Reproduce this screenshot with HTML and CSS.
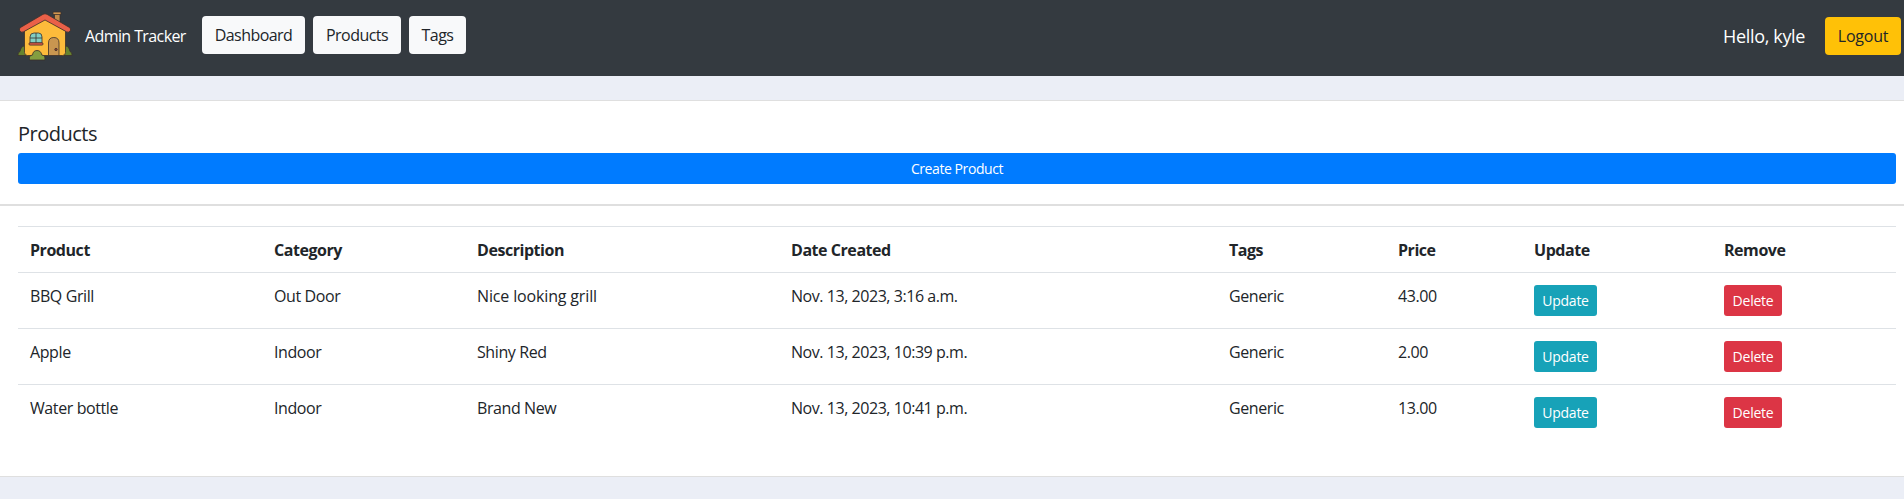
FILE: index.html
```html
<!DOCTYPE html>
<html lang="en">
<head>
<meta charset="utf-8">
<title>Admin Tracker</title>
<link rel="stylesheet" href="styles.css">
</head>
<body>
<nav class="navbar">
  <svg class="logo" viewBox="0 0 56 52" width="56" height="52" stroke="#3b302b" stroke-width=".8" stroke-linejoin="round">
    <path d="M1 45.500q-.5-3 2-4 1-5.500 4.500-5.500 4 0 5 5v4.500zM55 45.500q.5-3-2-4-1-5.500-4.500-5.500-4 0-5 5v4.500z" fill="#66832f"/>
    <path d="M37.500 3h5.500v11l-5.500-3z" fill="#c28b4a"/>
    <rect x="36" y="2" width="8" height="2.500" fill="#d09750"/>
    <path d="M7.500 21 28 8.500 48.500 21v21.500q0 3-3 3H10.500q-3 0-3-3z" fill="#fdbb3b"/>
    <path d="M26 4.300q2-1 4 0L52.500 17.500q1.800 1.300.8 3.300-1.200 2-3.600 1.100L28 10 6.300 21.900q-2.400.9-3.600-1.100-1-2 .8-3.300z" fill="#ea6048"/>
    <path d="M31.500 45.500V33q0-5.500 5.300-5.500T42 33v12.500z" fill="#c99650"/>
    <circle cx="39" cy="39.500" r="1.200" fill="#9b432e"/>
    <path d="M13 33v-6q0-4 4-4h4.500q3.500 0 3.500 4v6z" fill="#80cec3"/>
    <path d="M19 23v10M13 28h12" fill="none"/>
    <rect x="12" y="32.800" width="14" height="2.300" rx="1" fill="#e35b45"/>
    <path d="M12.500 50q-1-4.500 3-5 .5-4.500 4.500-4.500t4.800 4.500q4 .5 3 5z" fill="#849e40"/>
  </svg>
  <span class="brand">Admin Tracker</span>
  <a class="btn btn-light dashboard">Dashboard</a>
  <a class="btn btn-light products">Products</a>
  <a class="btn btn-light tags">Tags</a>
  <span class="greeting">Hello, kyle</span>
  <a class="btn btn-warning">Logout</a>
</nav>
<main>
  <section class="card card-head">
    <h5>Products</h5>
    <a class="btn btn-sm btn-primary">Create Product</a>
  </section>
  <section class="card">
    <table>
      <colgroup><col class="c1"><col class="c2"><col class="c3"><col class="c4"><col class="c5"><col class="c6"><col class="c7"><col class="c8"></colgroup>
      <tr><th>Product</th><th>Category</th><th>Description</th><th>Date Created</th><th>Tags</th><th>Price</th><th>Update</th><th>Remove</th></tr>
      <tr><td>BBQ Grill</td><td>Out Door</td><td class="description">Nice looking grill</td><td class="date">Nov. 13, 2023, 3:16 a.m.</td><td>Generic</td><td>43.00</td><td class="action"><a class="btn btn-sm btn-info">Update</a></td><td class="action"><a class="btn btn-sm btn-danger">Delete</a></td></tr>
      <tr><td>Apple</td><td>Indoor</td><td>Shiny Red</td><td class="date">Nov. 13, 2023, 10:39 p.m.</td><td>Generic</td><td>2.00</td><td class="action"><a class="btn btn-sm btn-info">Update</a></td><td class="action"><a class="btn btn-sm btn-danger">Delete</a></td></tr>
      <tr><td>Water bottle</td><td>Indoor</td><td>Brand New</td><td class="date">Nov. 13, 2023, 10:41 p.m.</td><td>Generic</td><td>13.00</td><td class="action"><a class="btn btn-sm btn-info">Update</a></td><td class="action"><a class="btn btn-sm btn-danger">Delete</a></td></tr>
    </table>
  </section>
</main>
</body>
</html>
```
FILE: styles.css
```css
* { box-sizing: border-box; }
body { margin: 0; min-height: 499px; background: #ebeef6; color: #212529; font: 16px/21px "Segoe UI", "Open Sans", "Noto Sans", sans-serif; letter-spacing: -.25px; }
.navbar { display: flex; align-items: flex-start; height: 76px; padding: 10px 3px 0 17px; background: #343a40; color: #fff; }
.logo { flex: none; }
.brand { width: 117px; margin: 16px 0 0 12px; letter-spacing: -.6px; white-space: nowrap; }
.btn { display: block; height: 38px; padding: 6px 0; border: 1px solid transparent; border-radius: 4px; line-height: 24px; text-align: center; white-space: nowrap; }
.btn-light { margin: 6px 8px 0 0; background: #f8f9fa; color: #212529; letter-spacing: -.55px; }
.dashboard { width: 103px; }
.products { width: 88px; }
.tags { width: 57px; }
.greeting { margin: 14px 20px 0 auto; font-size: 18px; line-height: 24px; letter-spacing: -.35px; }
.btn-warning { width: 76px; margin-top: 7px; background: #ffc107; color: #212529; }
.btn-sm { height: 31px; padding: 4px 0; border-radius: 3px; font-size: 14px; line-height: 21px; letter-spacing: -.25px; color: #fff; }
.btn-primary { background: #007bff; letter-spacing: -.42px; }
.btn-info { width: 63px; background: #17a2b8; }
.btn-danger { width: 58px; background: #dc3545; }
main { margin-top: 24px; }
.card { padding: 20px 8px 20px 18px; border: solid #dfdfdf; border-width: 1px 0; background: #fff; }
h5 { margin: 0 0 7px; padding-top: 1px; font-size: 20px; line-height: 24px; font-weight: 500; letter-spacing: -.5px; }
table { width: 1878px; margin-bottom: 16px; border-collapse: separate; border-spacing: 0; table-layout: fixed; }
th, td { padding: 13px 12px 11px; border-top: 1px solid #dee2e6; text-align: left; vertical-align: top; white-space: nowrap; letter-spacing: -.4px; }
th { font-weight: 700; letter-spacing: -.45px; }
.description { letter-spacing: -.15px; }
.date { letter-spacing: -.45px; }
.action { padding: 12px; }
.c1 { width: 244px; }
.c2 { width: 203px; }
.c3 { width: 314px; }
.c4 { width: 438px; }
.c5 { width: 169px; }
.c6 { width: 136px; }
.c7 { width: 190px; }
.c8 { width: 184px; }
```
